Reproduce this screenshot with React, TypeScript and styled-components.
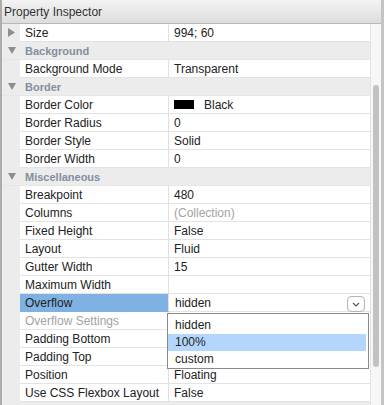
import React from "react";
import styled, { createGlobalStyle } from "styled-components";

const Global = createGlobalStyle`
  html, body { margin: 0; padding: 0; background: #ececec; }
  body { font-family: "Liberation Sans", Arial, Helvetica, sans-serif; }
  * { box-sizing: border-box; }
`;

const Panel = styled.div`
  width: 384px;
  height: 405px;
  border-left: 2px solid #acacac;
  border-right: 3px solid #c4c4c4;
  background: #ececec;
  display: flex;
  flex-direction: column;
  overflow: hidden;
`;

const TitleBar = styled.div`
  height: 24px;
  flex: none;
  padding: 1px 0 0 2px;
  line-height: 22px;
  font-size: 12px;
  color: #333;
  background: linear-gradient(#f3f3f3, #dddddd);
  border-bottom: 1px solid #b8b8b8;
`;

const Body = styled.div`
  flex: 1;
  display: flex;
  min-height: 0;
`;

const Grid = styled.div`
  flex: 1;
  display: flex;
  flex-direction: column;
`;

const SectionRow = styled.div`
  height: 18px;
  display: flex;
  align-items: center;
  background: #ececec;
  border-bottom: 1px solid #e6e6e6;
`;

const Gutter = styled.div`
  width: 18px;
  height: 17px;
  flex: none;
  display: flex;
  align-items: center;
  padding-left: 6px;
`;

const SectionTitle = styled.div`
  padding-left: 5px;
  font-size: 11px;
  font-weight: bold;
  line-height: 18px;
  height: 17px;
  color: #8290a0;
`;

const PropRow = styled.div`
  height: 18px;
  display: grid;
  grid-template-columns: 18px 149px 1fr;
`;

const LabelCell = styled.div<{ $selected?: boolean; $muted?: boolean }>`
  height: 18px;
  padding-left: 5px;
  font-size: 12px;
  line-height: 18px;
  white-space: nowrap;
  overflow: hidden;
  color: ${(p) => (p.$muted ? "#a2a2a2" : "#222")};
  background: ${(p) => (p.$selected ? "#80b1e3" : "#fff")};
  border-bottom: 1px solid ${(p) => (p.$selected ? "#80b1e3" : "#e3e3e3")};
  border-right: 1px solid #e0e0e0;
`;

const ValueCell = styled.div<{ $muted?: boolean }>`
  position: relative;
  height: 18px;
  padding-left: 5px;
  font-size: 12px;
  line-height: 18px;
  white-space: nowrap;
  color: ${(p) => (p.$muted ? "#a2a2a2" : "#222")};
  background: #fff;
  border-bottom: 1px solid #e3e3e3;
  display: flex;
  align-items: flex-start;
`;

const Swatch = styled.span`
  width: 20px;
  height: 9px;
  margin: 4px 10px 0 0;
  background: #000;
  flex: none;
`;

const SelectText = styled.span`
  flex: 1;
  padding-left: 1px;
`;

const ChevronButton = styled.span`
  width: 18px;
  height: 16px;
  margin: 2px 5px 0 0;
  border: 1px solid #b4b4b4;
  border-radius: 4px;
  background: #fff;
  display: flex;
  align-items: center;
  justify-content: center;
  flex: none;
`;

const Menu = styled.div`
  position: absolute;
  left: -2px;
  top: 19px;
  width: 202px;
  height: 56px;
  padding: 3px 2px 0 0;
  background: #fff;
  border: 1px solid #8a8a8a;
  z-index: 5;
`;

const MenuItem = styled.div<{ $active?: boolean }>`
  height: 17px;
  line-height: 17px;
  padding-left: 7px;
  font-size: 12px;
  color: #222;
  background: ${(p) => (p.$active ? "#b4d6fd" : "transparent")};
`;

const ScrollTrack = styled.div`
  width: 11px;
  flex: none;
  background: #f7f7f7;
  border-left: 1px solid #e2e2e2;
  padding: 61px 0 0 2px;
`;

const Thumb = styled.div`
  width: 6px;
  height: 282px;
  border-radius: 3px;
  background: #c2c2c2;
`;

const TriRight = () => (
  <svg width="7" height="9" viewBox="0 0 7 9">
    <polygon points="0,0 7,4.5 0,9" fill="#8e8e8e" />
  </svg>
);

const TriDown = () => (
  <svg width="8" height="7" viewBox="0 0 8 7">
    <polygon points="0,0 8,0 4,7" fill="#8e8e8e" />
  </svg>
);

type Row =
  | { kind: "section"; title: string }
  | {
      kind: "prop";
      label: string;
      value?: string;
      mutedValue?: boolean;
      mutedLabel?: boolean;
      expandable?: boolean;
      swatch?: boolean;
      select?: boolean;
    };

const rows: Row[] = [
  { kind: "prop", label: "Size", value: "994; 60", expandable: true },
  { kind: "section", title: "Background" },
  { kind: "prop", label: "Background Mode", value: "Transparent" },
  { kind: "section", title: "Border" },
  { kind: "prop", label: "Border Color", value: "Black", swatch: true },
  { kind: "prop", label: "Border Radius", value: "0" },
  { kind: "prop", label: "Border Style", value: "Solid" },
  { kind: "prop", label: "Border Width", value: "0" },
  { kind: "section", title: "Miscellaneous" },
  { kind: "prop", label: "Breakpoint", value: "480" },
  { kind: "prop", label: "Columns", value: "(Collection)", mutedValue: true },
  { kind: "prop", label: "Fixed Height", value: "False" },
  { kind: "prop", label: "Layout", value: "Fluid" },
  { kind: "prop", label: "Gutter Width", value: "15" },
  { kind: "prop", label: "Maximum Width", value: "" },
  { kind: "prop", label: "Overflow", value: "hidden", select: true },
  { kind: "prop", label: "Overflow Settings", value: "", mutedLabel: true },
  { kind: "prop", label: "Padding Bottom", value: "" },
  { kind: "prop", label: "Padding Top", value: "" },
  { kind: "prop", label: "Position", value: "Floating" },
  { kind: "prop", label: "Use CSS Flexbox Layout", value: "False" },
];

const options = ["hidden", "100%", "custom"];

export default function App() {
  return (
    <>
      <Global />
      <Panel>
        <TitleBar>Property Inspector</TitleBar>
        <Body>
          <Grid>
            {rows.map((r, i) =>
              r.kind === "section" ? (
                <SectionRow key={i}>
                  <Gutter>
                    <TriDown />
                  </Gutter>
                  <SectionTitle>{r.title}</SectionTitle>
                </SectionRow>
              ) : (
                <PropRow key={i}>
                  <Gutter>{r.expandable ? <TriRight /> : null}</Gutter>
                  <LabelCell $selected={r.select} $muted={r.mutedLabel}>
                    {r.label}
                  </LabelCell>
                  <ValueCell $muted={r.mutedValue}>
                    {r.swatch ? <Swatch /> : null}
                    {r.select ? (
                      <>
                        <SelectText>{r.value}</SelectText>
                        <ChevronButton>
                          <svg width="8" height="5" viewBox="0 0 8 5">
                            <polyline
                              points="1,1 4,4 7,1"
                              fill="none"
                              stroke="#555"
                              strokeWidth="1.2"
                            />
                          </svg>
                        </ChevronButton>
                        <Menu>
                          {options.map((o) => (
                            <MenuItem key={o} $active={o === "100%"}>
                              {o}
                            </MenuItem>
                          ))}
                        </Menu>
                      </>
                    ) : (
                      r.value
                    )}
                  </ValueCell>
                </PropRow>
              )
            )}
          </Grid>
          <ScrollTrack>
            <Thumb />
          </ScrollTrack>
        </Body>
      </Panel>
    </>
  );
}
